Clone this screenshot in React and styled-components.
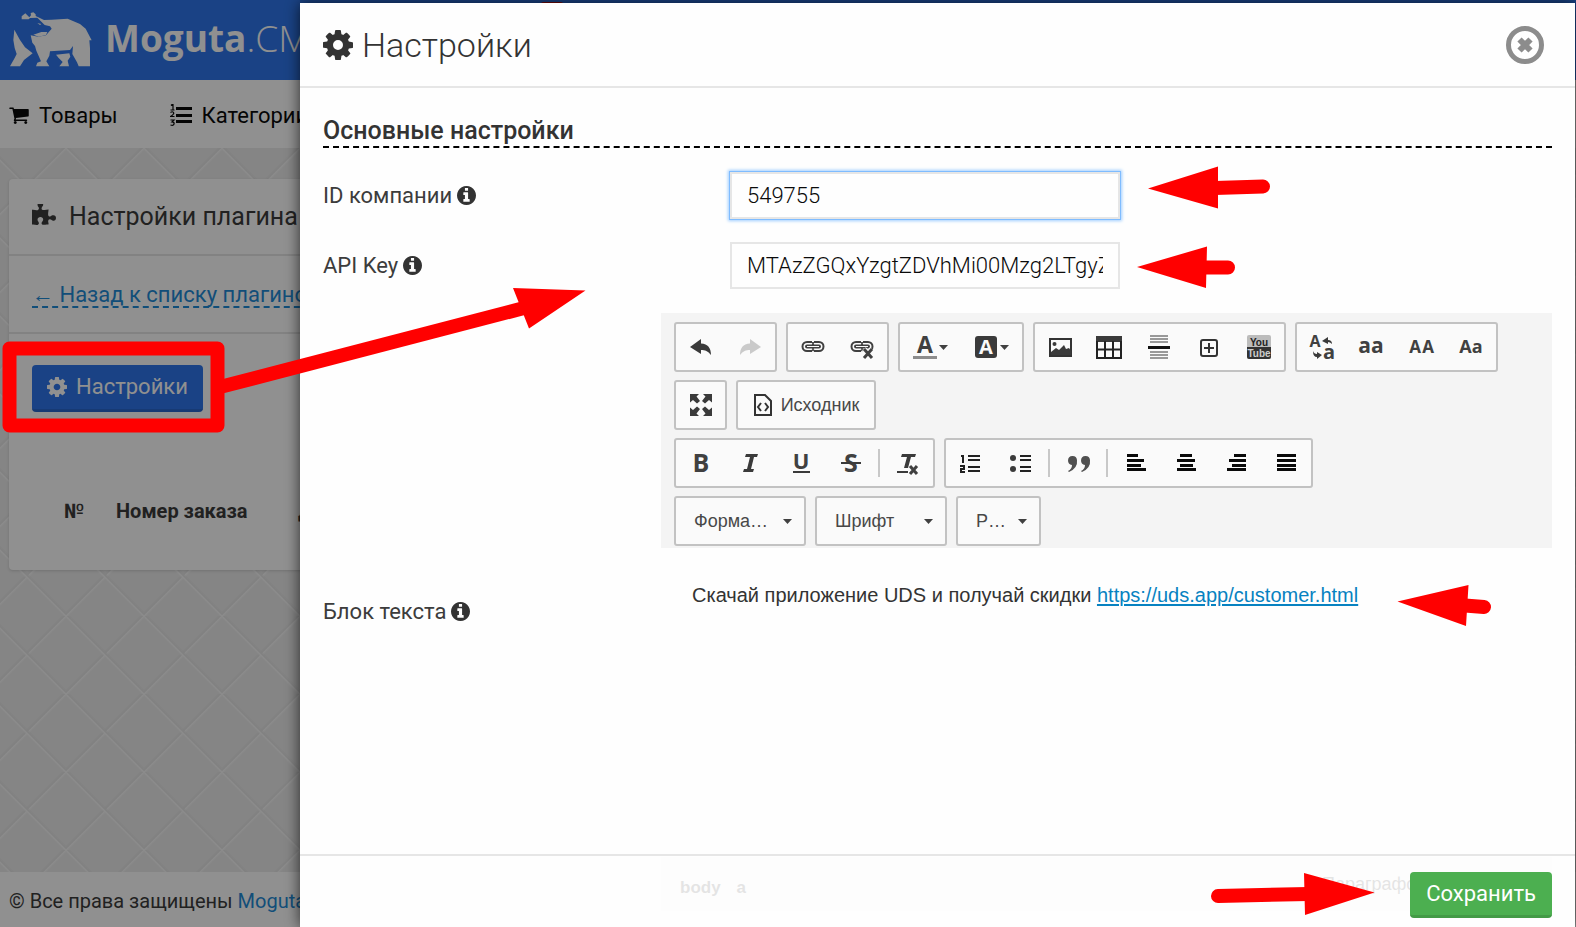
import React from "react";
import styled, { createGlobalStyle } from "styled-components";

const GlobalStyle = createGlobalStyle`
  *, *::before, *::after { box-sizing: border-box; }
  body { margin: 0; font-family: Roboto, "Liberation Sans", sans-serif; color: #333; overflow: hidden; }
  button, input, select { font-family: inherit; margin: 0; }
`;

/* ---------- page behind the dialog ---------- */

const Page = styled.div`
  display: flex;
  flex-direction: column;
  height: 100vh;
  overflow: hidden;
  white-space: nowrap;
  background-color: #ebebeb;
  background-image:
    linear-gradient(45deg, transparent 48%, #f6f6f6 50%, #e3e3e3 51%, transparent 53%),
    linear-gradient(-45deg, transparent 48%, #f6f6f6 50%, #e3e3e3 51%, transparent 53%);
  background-size: 78px 78px;
  background-position: 66px 70px;
`;

const TopBar = styled.header`
  position: relative;
  display: flex;
  align-items: center;
  flex: none;
  gap: 13px;
  height: 80px;
  padding-left: 10px;
  background: #2e76eb;
`;

const Notice = styled.span`
  position: absolute;
  left: 540px;
  top: 2px;
  width: 24px;
  height: 24px;
  border-radius: 4px;
  background: #d01010;
`;

const Brand = styled.a`
  padding-bottom: 4px;
  font-family: "Open Sans", sans-serif;
  font-size: 37px;
  font-weight: 300;
  line-height: 52px;
  color: #fff;
  text-decoration: none;
  b { font-weight: 700; }
`;

const Nav = styled.nav`
  display: flex;
  align-items: center;
  flex: none;
  gap: 52px;
  height: 68px;
  padding: 2px 0 0 9px;
  background: #fff;
`;

const NavLink = styled.a`
  display: flex;
  align-items: center;
  gap: 10px;
  font-size: 22px;
  color: #0a0a0a;
  text-decoration: none;
`;

const Main = styled.main`
  flex: 1;
  padding: 31px 9px;
`;

const Panel = styled.section`
  height: 391px;
  border-radius: 4px;
  background: #fff;
  box-shadow: 0 1px 3px rgba(0, 0, 0, 0.15);
`;

const PanelRow = styled.div`
  display: flex;
  align-items: center;
  gap: 13px;
  height: ${(p) => p.$height}px;
  padding: 0 23px;
  border-bottom: 2px solid #e6e6e6;
`;

const PanelTitle = styled.h1`
  margin: 0;
  font-size: 25px;
  font-weight: 400;
  color: #3c3c3c;
`;

const BackLink = styled.a`
  padding-top: 4px;
  font-size: 22px;
  line-height: 22px;
  color: #1f8bd6;
  text-decoration: none;
  border-bottom: 2px dashed #1f8bd6;
`;

const PanelBody = styled.div`
  padding: 31px 23px;
`;

const ActionButton = styled.button`
  display: inline-flex;
  align-items: center;
  justify-content: center;
  gap: 9px;
  height: ${(p) => (p.$green ? 46 : 47)}px;
  padding: 0 ${(p) => (p.$green ? 16 : 15)}px 1px;
  border: 0;
  border-bottom: 3px solid ${(p) => (p.$green ? "#439a46" : "#2a68ce")};
  border-radius: 4px;
  background: ${(p) => (p.$green ? "#4caf50" : "#2e76eb")};
  color: #fff;
  font-size: 22px;
  white-space: nowrap;
`;

const Orders = styled.table`
  margin: 87px 0 0 32px;
  border-spacing: 0;
  font-size: 20px;
  color: #3c3c3c;
  th { padding: 0; text-align: left; font-weight: 700; line-height: 24px; }
`;

const HeadCell = styled.th`
  min-width: ${(p) => p.$width}px;
`;

const PageFooter = styled.footer`
  flex: none;
  height: 55px;
  padding: 0 9px;
  background: #fff;
  font-size: 20px;
  line-height: 58px;
  color: #3c3c3c;
  a { color: #1f8bd6; text-decoration: none; }
`;

const Backdrop = styled.div`
  position: fixed;
  inset: 0;
  background: rgba(0, 0, 0, 0.435);
`;

/* ---------- dialog ---------- */

const Dialog = styled.div`
  position: fixed;
  top: 3px;
  right: 1px;
  bottom: 0;
  left: 300px;
  display: flex;
  flex-direction: column;
  overflow: hidden;
  background: #fefefe;
`;

const DialogShadow = styled.div`
  position: fixed;
  top: 3px;
  right: 1px;
  bottom: 0;
  left: 300px;
  box-shadow: 0 0 14px rgba(0, 0, 0, 0.7);
`;

const DialogHeader = styled.header`
  display: flex;
  align-items: center;
  flex: none;
  gap: 9px;
  height: 85px;
  padding: 0 31px 0 23px;
  border-bottom: 2px solid #e6e6e6;
`;

const DialogTitle = styled.h2`
  flex: 1;
  margin: 0;
  font-size: 34px;
  font-weight: 300;
  line-height: 40px;
`;

const CloseButton = styled.button`
  display: flex;
  padding: 0;
  border: 0;
  background: none;
`;

const DialogBody = styled.div`
  display: flex;
  flex-direction: column;
  flex: 1;
  gap: 23px;
  padding: 28px 23px 0;
`;

const SectionTitle = styled.h3`
  margin: 0 0 1px;
  border-bottom: 2px dashed #000;
  font-size: 25px;
  font-weight: 500;
  line-height: 30px;
`;

const Field = styled.div`
  display: grid;
  grid-template-columns: ${(p) => (p.$wide ? "338px minmax(0, 1fr)" : "407px 390px")};
  align-items: center;
`;

const FieldLabel = styled.label`
  display: flex;
  align-items: center;
  gap: 5px;
  font-size: 22px;
  font-weight: 400;
  color: #3c3c3c;
`;

const TextInput = styled.input`
  width: 100%;
  height: 47px;
  padding: 0 15px;
  border: 2px solid #e6e6e6;
  border-radius: 0;
  background: #fefefe;
  color: #0a0a0a;
  font-size: 22px;
  font-weight: 300;
  outline: none;
  box-shadow: ${(p) => (p.$active ? "0 0 0 1px #7fbcff, 0 0 3px 2px #9fcdff" : "none")};
`;

const Editor = styled.div`
  display: flex;
  flex-direction: column;
  padding-top: 1px;
  font-family: "Liberation Sans", Arial, sans-serif;
`;

const Toolbar = styled.div`
  display: flex;
  flex-direction: column;
  gap: 8px;
  padding: 9px 13px 2px;
  background: #f4f4f4;
`;

const ToolRow = styled.div`
  display: flex;
  gap: 9px;
`;

const ToolGroup = styled.div`
  display: flex;
  align-items: center;
  height: 50px;
  border: 2px solid #c2c2c2;
  border-radius: 3px;
  background: #fafafa;
`;

const ToolButton = styled.button`
  display: flex;
  align-items: center;
  justify-content: center;
  gap: ${(p) => (p.$width > 100 ? 8 : 2)}px;
  width: ${(p) => (p.$width || 50)}px;
  height: 46px;
  padding: 0;
  border: 0;
  background: none;
  color: #484848;
  font-size: 18px;
  &:first-child { width: ${(p) => (p.$width || 50) - 1}px; }
  svg { flex: none; overflow: visible; }
`;

const Separator = styled.span`
  width: 2px;
  height: 28px;
  margin: 0 3px;
  background: #c8c8c8;
`;

const ComboWrap = styled.label`
  position: relative;
  display: flex;
  align-items: center;
  width: ${(p) => p.$width}px;
  height: 50px;
  border: 2px solid #c2c2c2;
  border-radius: 3px;
  background: #fafafa;
  svg { position: absolute; right: 12px; pointer-events: none; }
`;

const Combo = styled.select`
  width: 100%;
  height: 100%;
  padding: 0 18px;
  border: 0;
  appearance: none;
  background: none;
  color: #484848;
  font-size: 18px;
`;

const EditorContent = styled.div`
  height: 309px;
  padding: 34px 31px;
  font-size: 20px;
  line-height: 26px;
  a { color: #0782c1; text-decoration-thickness: 2px; text-underline-offset: 2px; }
`;

const StatusBar = styled.div`
  display: flex;
  align-items: center;
  justify-content: space-between;
  height: 54px;
  padding: 8px 13px 0 19px;
  background: #f4f4f4;
  font-size: 18px;
  color: #484848;
`;

const PathItems = styled.span`
  display: flex;
  gap: 16px;
  font-size: 17px;
  font-weight: 700;
`;

const Counter = styled.span`
  width: 217px;
  line-height: 20px;
  padding-bottom: 8px;
`;

const DialogFooter = styled.footer`
  position: absolute;
  right: 0;
  bottom: 0;
  left: 0;
  display: flex;
  align-items: flex-start;
  justify-content: flex-end;
  height: 73px;
  padding: 16px 23px 0;
  border-top: 2px solid #e6e6e6;
  background: rgba(254, 254, 254, 0.86);
`;

const Annotations = styled.svg`
  position: fixed;
  top: 0;
  left: 0;
  pointer-events: none;
`;

/* ---------- icons ---------- */

const Cog = ({ size, color = "currentColor" }) => (
  <svg width={size} height={size} viewBox="0 128 1536 1536" fill={color} aria-hidden="true">
    <path d="M1024 896q0-106-75-181t-181-75-181 75-75 181 75 181 181 75 181-75 75-181zm512-109v222q0 12-8 23t-20 13l-185 28q-19 54-39 91 35 50 107 138 10 12 10 25t-9 23q-27 37-99 108t-94 71q-12 0-26-9l-138-108q-44 23-91 38-16 136-29 186-7 28-36 28h-222q-14 0-24.500-8.500t-11.500-21.500l-28-184q-49-16-90-37l-141 107q-10 9-25 9-14 0-25-11-126-114-165-168-7-10-7-23 0-12 8-23 15-21 51-66.500t54-70.500q-27-50-41-99l-183-27q-13-2-21-12.500t-8-23.500v-222q0-12 8-23t19-13l186-28q14-46 39-92-40-57-107-138-10-12-10-24 0-10 9-23 26-36 98.500-107.500t94.500-71.500q13 0 26 10l138 107q44-23 91-38 16-136 29-186 7-28 36-28h222q14 0 24.500 8.500t11.500 21.500l28 184q49 16 90 37l142-107q9-9 24-9 13 0 25 10 129 119 165 170 7 8 7 22 0 12-8 23-15 21-51 66.500t-54 70.500q26 50 41 98l183 28q13 2 21 12.500t8 23.500z" />
  </svg>
);

const Info = () => (
  <svg width="19" height="19" viewBox="0 128 1536 1536" fill="#333" aria-hidden="true">
    <path d="M1024 1376v-160q0-14-9-23t-23-9h-96v-512q0-14-9-23t-23-9h-320q-14 0-23 9t-9 23v160q0 14 9 23t23 9h96v320h-96q-14 0-23 9t-9 23v160q0 14 9 23t23 9h448q14 0 23-9t9-23zm-128-896v-160q0-14-9-23t-23-9h-192q-14 0-23 9t-9 23v160q0 14 9 23t23 9h192q14 0 23-9t9-23zm640 416q0 209-103 385.500t-279.500 279.500-385.500 103-385.500-103-279.500-279.500-103-385.500 103-385.500 279.500-279.500 385.500-103 385.500 103 279.500 279.500 103 385.500z" />
  </svg>
);

const Cart = () => (
  <svg width="20" height="18" viewBox="0 128 1664 1536" fill="#0a0a0a" aria-hidden="true">
    <path d="M640 1536q0 52-38 90t-90 38-90-38-38-90 38-90 90-38 90 38 38 90zm896 0q0 52-38 90t-90 38-90-38-38-90 38-90 90-38 90 38 38 90zm128-1088v512q0 24-16.500 42.500t-40.500 21.500l-1044 122q13 60 13 70 0 16-24 64h920q26 0 45 19t19 45-19 45-45 19h-1024q-26 0-45-19t-19-45q0-11 8-31.500t16-36 21.500-40 15.500-29.500l-177-823h-204q-26 0-45-19t-19-45 19-45 45-19h256q16 0 28.500 6.500t19.500 15.500 13 24.500 8 26 5.500 29.500 4.500 26h1201q26 0 45 19t19 45z" />
  </svg>
);

const Puzzle = () => (
  <svg width="24" height="26" viewBox="0 0 1664 1792" fill="#3c3c3c" aria-hidden="true">
    <path d="M1664 970q0 81-44.500 135t-123.500 54q-41 0-77.500-17.500t-59-38-56.500-38-71-17.500q-110 0-110 124 0 39 16 115t15 115v5q-22 0-33 1-34 3-97.500 11.500t-115.500 13.500-98 5q-61 0-103-26.500t-42-83.500q0-37 17.500-71t38-56.500 38-59 17.500-77.500q0-79-54-123.500t-135-44.500q-84 0-143 45.500t-59 127.500q0 43 15 83t33.500 64.500 33.500 53 15 50.500q0 45-46 89-37 35-117 35-95 0-245-24-9-2-27.500-4t-27.500-4l-13-2q-1 0-3-1-2 0-2-1v-1024q2 1 17.500 3.500t34 5 21.500 3.500q150 24 245 24 80 0 117-35 46-44 46-89 0-22-15-50.500t-33.500-53-33.500-64.500-15-83q0-82 59-127.500t144-45.500q80 0 134 44.500t54 123.500q0 41-17.500 77.500t-38 59-38 56.500-17.500 71q0 57 42 83.500t103 26.500q64 0 180-15t163-17v2q-1 2-3.500 17.500t-5 34-3.500 21.500q-24 150-24 245 0 80 35 117 44 46 89 46 22 0 50.500-15t53-33.500 64.500-33.500 83-15q82 0 127.500 59t45.500 143z" />
  </svg>
);

const NumberedList = () => (
  <svg width="22" height="22" viewBox="0 0 22 22" fill="#0a0a0a" aria-hidden="true">
    <path d="M6 3h16v3H6zM6 10h16v3H6zM6 16h16v3H6z" />
    <path d="M2 0h1v6M1 1.500l1.500-1.500M.5 6h4M.5 8.500q2-1.500 3 0t-3 4h4M.5 16h3.500l-2 2q2.500 0 2 2t-3.500 1" fill="none" stroke="#0a0a0a" strokeWidth="1.200" />
  </svg>
);

const Close = () => (
  <svg width="38" height="38" viewBox="0 0 38 38" fill="none" stroke="#8c8c8c" aria-hidden="true">
    <circle cx="19" cy="19" r="16.500" strokeWidth="5" />
    <path d="M13.500 13.500l11 11M24.500 13.500l-11 11" strokeWidth="6" />
  </svg>
);

const Bear = () => (
  <svg width="82" height="56" viewBox="30 34 246 168" fill="#fff" aria-hidden="true">
    <path d="M43 87L60 118 75 140 98 158 72 178 60 197H30L44 172 50 160 44 142 40 118z" />
    <path d="M65 56V47L76 38 88 50 93 44 92 37 100 35 107 41V46L132 58 155 57 203 54 240 70 257 84 275 119 268 119 270 142V197H236L231 185 217 160 219 136 210 148 150 152 148 165 139 182 148 197H108L112 186 123 182 109 150 105 136 97 126 92 104 115 108 138 104 155 84 150 77 134 73 112 51 90 52 86 56z" />
    <path d="M100 102L116 108 138 103 142 94 124 94zM112 67l12 3-4 3z" />
    <path d="M168 162L208 158 211 168 203 180 207 197H178L188 184 176 172z" />
  </svg>
);

const Glyph = ({ children, width = 24 }) => (
  <svg width={width} height="24" viewBox={`0 0 ${width} 24`} fill="#3a3a3a" aria-hidden="true">{children}</svg>
);

const Letters = ({ x = 12, y, size, children, fill = "#404040" }) => (
  <text x={x} y={y} fontSize={size} fill={fill} textAnchor="middle" fontWeight="700" fontFamily="Open Sans, sans-serif">{children}</text>
);

const Caret = () => (
  <svg width="9" height="5" viewBox="0 0 9 5" fill="#404040" aria-hidden="true"><path d="M0 0h9L4.500 5z" /></svg>
);

const undoShape = "M1 12L12 4V8.500C19 9 22 13 22 20C19 16 16 15 12 15V19Z";
const linkShape = (
  <g fill="none" stroke="#404040" strokeWidth="2">
    <path d="M11 7H6a4 4 0 0 0 0 9h5M13 7h5a4 4 0 0 1 0 9h-5" />
    <path d="M11 7q3 2 1 4M13 7q-3 2-1 4M11 16q3-1 1-3M13 16q-3-1-1-3" strokeWidth="1" />
    <path d="M6 11.500h12" strokeWidth="4" strokeLinecap="round" />
    <path d="M6 11.500h12" stroke="#fafafa" strokeWidth="1" />
  </g>
);

const icons = {
  undo: <Glyph><path d={undoShape} /></Glyph>,
  redo: <Glyph><path d={undoShape} transform="matrix(-1 0 0 1 24 0)" opacity="0.25" /></Glyph>,
  link: <Glyph>{linkShape}</Glyph>,
  unlink: <Glyph>{linkShape}<path d="M14 14l8 9M22 14l-8 9" stroke="#fafafa" strokeWidth="5" /><path d="M14 14l8 9M22 14l-8 9" stroke="#404040" strokeWidth="3" /></Glyph>,
  color: <Glyph><Letters y={18} size={23}>A</Letters><path d="M0 21h24v3H0z" fill="#8c8c8c" /></Glyph>,
  background: <Glyph><rect x="1" y="1" width="22" height="22" rx="3" /><Letters y={19} size={20} fill="#fafafa">A</Letters></Glyph>,
  image: <Glyph><rect x="2" y="4" width="21" height="17" fill="none" stroke="#333" strokeWidth="2" /><circle cx="6.500" cy="9" r="2" /><path d="M3 20v-3l5-4 3 2 5-5 2 4 3-1 2 3v4z" /></Glyph>,
  table: <Glyph width={26}><path d="M0 1h26v6H0z" /><path d="M1 6v17h24V6M1 14.500h24M9 6v17M17 6v17" fill="none" stroke="#222" strokeWidth="2" /></Glyph>,
  pagebreak: <Glyph><path d="M3 0h18v2H3zM3 3h18v2H3zM3 6h18v2H3zM3 16h18v2H3zM3 19h18v2H3zM3 22h18v2H3z" fill="#999" /><path d="M1 11h22v3H1z" fill="#111" /></Glyph>,
  frame: <Glyph><rect x="4" y="5" width="16" height="16" rx="2" fill="none" stroke="#333" strokeWidth="2" /><path d="M12 8v10M7 13h10" stroke="#333" strokeWidth="2" /></Glyph>,
  youtube: <Glyph width={26}><rect x="1" y="0" width="24" height="24" rx="2" fill="#bcbcbc" /><path d="M1 12h24v10q0 2-2 2H3q-2 0-2-2z" fill="#333" /><text x="13" y="11" fontSize="10" fontWeight="700" textAnchor="middle" fontFamily="Liberation Sans Narrow, Liberation Sans" fill="#222">You</text><text x="13" y="22" fontSize="10" fontWeight="700" textAnchor="middle" fontFamily="Liberation Sans Narrow, Liberation Sans" fill="#ccc">Tube</text></Glyph>,
  swapcase: <Glyph width={26}><Letters x={6} y={12} size={16}>A</Letters><Letters x={20} y={24} size={20}>a</Letters><path d="M13 6l6-4v3q4 0 4 4-2-2-4-2v2zM13 20l-5-3v2q-3 0-4-3 0 6 4 6v2z" /></Glyph>,
  lower: <Glyph><Letters y={18} size={21}>aa</Letters></Glyph>,
  small: <Glyph width={26}><Letters x={7} y={18} size={17}>A</Letters><Letters x={20} y={18} size={17}>A</Letters></Glyph>,
  title: <Glyph><Letters y={18} size={18}>Aa</Letters></Glyph>,
  maximize: <Glyph><path d="M1 1h9L7.500 3.500 11 8 8 10.500 4 7 1 9.500zM23 1h-9l2.500 2.500L13 8l3 2.500L20 7l3 2.500zM1 23h9l-2.500-2.500L11 16l-3-2.500L4 17l-3-2.500zM23 23h-9l2.500-2.500L13 16l3-2.500 4 3.500 3-2.500z" /></Glyph>,
  source: <Glyph width={20}><path d="M2 2h10l6 6v14H2z" fill="none" stroke="#333" strokeWidth="2" /><path d="M8 10l-3 4 3 4M12 10l3 4-3 4" fill="none" stroke="#333" strokeWidth="2" /></Glyph>,
  bold: <Glyph><Letters y={21} size={25}>B</Letters></Glyph>,
  italic: <Glyph><path d="M8 3h12l-1 3h-3l-3 12h3l-1 3H5l1-3h3l3-12H7z" /></Glyph>,
  underline: <Glyph><Letters x={13} y={18} size={22}>U</Letters><path d="M5 20h17v2H5z" /></Glyph>,
  strike: <Glyph><Letters x={13} y={21} size={25}>S</Letters><path d="M3 11h20v2H3z" /></Glyph>,
  clear: <Glyph><path d="M6 3h14l-1 3h-4l-3 11H8l3-11H5z" /><path d="M1 20h11v2H1z" /><path d="M14 15l7 8M21 15l-7 8" stroke="#404040" strokeWidth="3" /></Glyph>,
  ordered: <Glyph><path d="M9 4h12v2H9zM9 8h12v2H9zM9 15h12v2H9zM9 19h12v2H9z" fill="#222" /><path d="M2 5h2v7M1 15h4v3H2v3h4" fill="none" stroke="#222" strokeWidth="2" /></Glyph>,
  bullets: <Glyph><path d="M12 4h11v2H12zM12 8h11v2H12zM12 15h11v2H12zM12 19h11v2H12z" fill="#222" /><circle cx="5" cy="7" r="3" /><circle cx="5" cy="18" r="3" /></Glyph>,
  quote: <Glyph><path d="M2 20q4-2 4-6a4.500 4.500 0 1 1 5-5q1 8-8 12zM15 20q4-2 4-6a4.500 4.500 0 1 1 5-5q1 8-8 12z" fill="#505050" /></Glyph>,
  left: <Glyph><path d="M3 3h11v3H3zM3 8h17v3H3zM3 13h14v3H3zM3 17h19v3H3z" fill="#0a0a0a" /></Glyph>,
  center: <Glyph><path d="M6 3h12v3H6zM3 8h18v3H3zM6 13h13v3H6zM3 17h19v3H3z" fill="#0a0a0a" /></Glyph>,
  right: <Glyph><path d="M10 3h12v3H10zM5 8h17v3H5zM8 13h14v3H8zM3 17h19v3H3z" fill="#0a0a0a" /></Glyph>,
  justify: <Glyph><path d="M3 3h19v3H3zM3 8h19v3H3zM3 13h19v3H3zM3 17h19v3H3z" fill="#0a0a0a" /></Glyph>,
};

const Tool = ({ name, label, width, caret, text }) => (
  <ToolButton type="button" aria-label={text ? undefined : label} $width={width}>
    {icons[name]}
    {caret && <Caret />}
    {text}
  </ToolButton>
);

const Tools = ({ items }) => (
  <ToolGroup>
    {items.map(([name, label], i) =>
      name === "|" ? <Separator key={i} /> : <Tool key={i} name={name} label={label} />
    )}
  </ToolGroup>
);

const ToolSelect = ({ width, label, value }) => (
  <ComboWrap $width={width}>
    <Combo aria-label={label} defaultValue={value}>
      <option>{value}</option>
    </Combo>
    <Caret />
  </ComboWrap>
);

export default function App() {
  return (
    <>
      <GlobalStyle />
      <Page>
        <TopBar>
          <Bear />
          <Brand href="#"><b>Moguta</b>.CMS</Brand>
          <Notice />
        </TopBar>
        <Nav>
          <NavLink href="#"><Cart />Товары</NavLink>
          <NavLink href="#"><NumberedList />Категории</NavLink>
        </Nav>
        <Main>
          <Panel>
            <PanelRow $height={77}>
              <Puzzle />
              <PanelTitle>Настройки плагина</PanelTitle>
            </PanelRow>
            <PanelRow $height={78}>
              <BackLink href="#">← Назад к списку плагинов</BackLink>
            </PanelRow>
            <PanelBody>
              <ActionButton type="button"><Cog size={20} />Настройки</ActionButton>
              <Orders>
                <thead>
                  <tr>
                    <HeadCell $width={52}>№</HeadCell>
                    <HeadCell $width={182}>Номер заказа</HeadCell>
                    <HeadCell $width={120}>Дата</HeadCell>
                  </tr>
                </thead>
              </Orders>
            </PanelBody>
          </Panel>
        </Main>
        <PageFooter>© Все права защищены <a href="#">Moguta.CMS</a></PageFooter>
      </Page>
      <Backdrop />
      <DialogShadow />
      <Dialog role="dialog" aria-labelledby="dialog-title">
        <DialogHeader>
          <Cog size={30} color="#333" />
          <DialogTitle id="dialog-title">Настройки</DialogTitle>
          <CloseButton type="button" aria-label="Закрыть"><Close /></CloseButton>
        </DialogHeader>
        <DialogBody>
          <SectionTitle>Основные настройки</SectionTitle>
          <Field>
            <FieldLabel htmlFor="company">ID компании <Info /></FieldLabel>
            <TextInput id="company" $active defaultValue="549755" />
          </Field>
          <Field>
            <FieldLabel htmlFor="key">API Key <Info /></FieldLabel>
            <TextInput id="key" defaultValue="MTAzZGQxYzgtZDVhMi00Mzg2LTgyZ" />
          </Field>
          <Field $wide>
            <FieldLabel as="span" id="block-label">Блок текста <Info /></FieldLabel>
            <Editor role="group" aria-labelledby="block-label">
              <Toolbar>
                <ToolRow>
                  <Tools items={[["undo", "Отменить"], ["redo", "Повторить"]]} />
                  <Tools items={[["link", "Ссылка"], ["unlink", "Убрать ссылку"]]} />
                  <ToolGroup>
                    <Tool name="color" label="Цвет текста" width={62} caret />
                    <Tool name="background" label="Цвет фона" width={61} caret />
                  </ToolGroup>
                  <Tools items={[["image", "Изображение"], ["table", "Таблица"], ["pagebreak", "Разрыв страницы"], ["frame", "Фрейм"], ["youtube", "Видео"]]} />
                  <Tools items={[["swapcase", "Сменить регистр"], ["lower", "Строчные"], ["small", "Прописные"], ["title", "Каждое слово"]]} />
                </ToolRow>
                <ToolRow>
                  <Tools items={[["maximize", "Развернуть"]]} />
                  <ToolGroup>
                    <Tool name="source" text="Исходник" width={137} />
                  </ToolGroup>
                </ToolRow>
                <ToolRow>
                  <Tools items={[["bold", "Полужирный"], ["italic", "Курсив"], ["underline", "Подчеркнутый"], ["strike", "Зачеркнутый"], ["|"], ["clear", "Убрать форматирование"]]} />
                  <Tools items={[["ordered", "Нумерованный список"], ["bullets", "Маркированный список"], ["|"], ["quote", "Цитата"], ["|"], ["left", "По левому краю"], ["center", "По центру"], ["right", "По правому краю"], ["justify", "По ширине"]]} />
                </ToolRow>
                <ToolRow>
                  <ToolSelect width={132} label="Форматирование" value="Форма…" />
                  <ToolSelect width={132} label="Шрифт" value="Шрифт" />
                  <ToolSelect width={85} label="Размер" value="Р…" />
                </ToolRow>
              </Toolbar>
              <EditorContent>
                Скачай приложение UDS и получай скидки <a href="https://uds.app/customer.html">https://uds.app/customer.html</a>
              </EditorContent>
              <StatusBar>
                <PathItems><span>body</span><span>a</span></PathItems>
                <Counter>Параграфов</Counter>
              </StatusBar>
            </Editor>
          </Field>
        </DialogBody>
        <DialogFooter>
          <ActionButton type="button" $green>Сохранить</ActionButton>
        </DialogFooter>
      </Dialog>
      <Annotations width="1576" height="927" viewBox="0 0 1576 927" fill="#f00" stroke="none" aria-hidden="true">
        <g fill="none" stroke="#f00" strokeWidth="14" strokeLinecap="round">
          <rect x="9.500" y="348.500" width="208" height="77" strokeLinejoin="round" />
          <path d="M220 387L524 308" strokeLinecap="butt" />
          <path d="M1215 188L1263 186.500M1204 267.500H1228M1465 605.500L1484 607M1218 896L1308 894" />
        </g>
        <path d="M513 288L585.500 290.500 529 328.500zM1148 188.500L1218 166.500V208.500zM1137 267L1207 246.500 1206 288zM1397.500 601.500L1468.500 585 1466 626zM1374.500 892.500L1304 873 1305 915z" />
      </Annotations>
    </>
  );
}
